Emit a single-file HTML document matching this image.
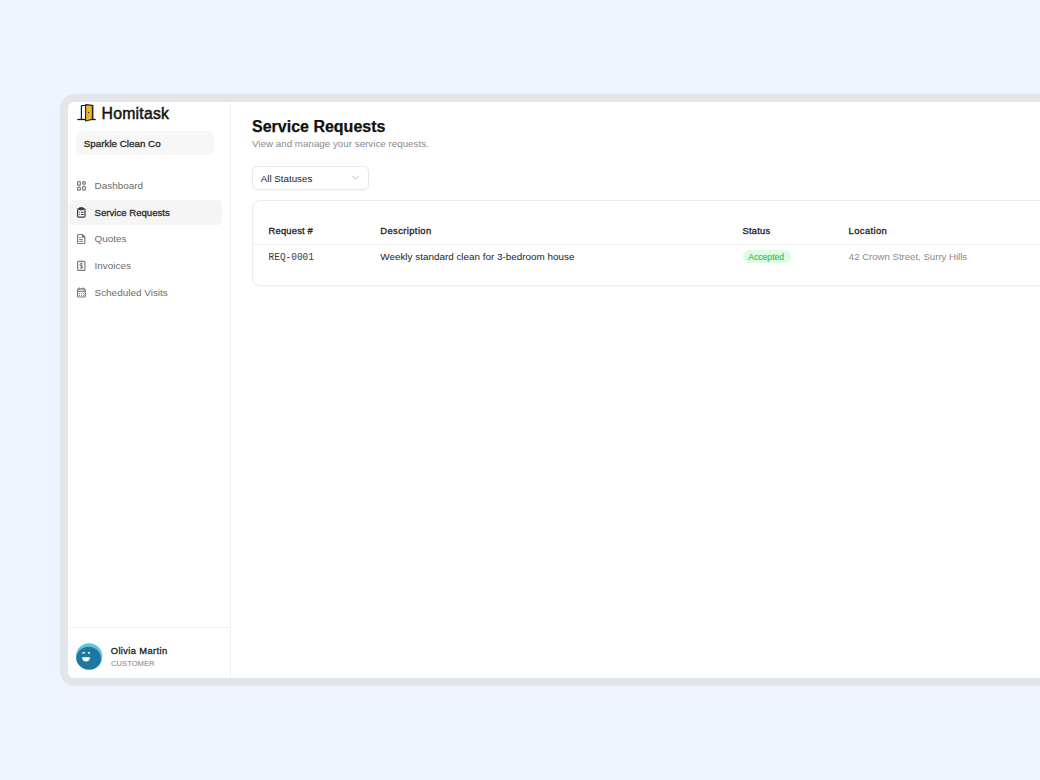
<!DOCTYPE html>
<html>
<head>
<meta charset="utf-8">
<style>
* { box-sizing: border-box; margin: 0; padding: 0; }
html, body { width: 1040px; height: 780px; overflow: hidden; }
body { background: #eef5fe; font-family: "Liberation Sans", sans-serif; position: relative; }
.frame { position: absolute; left: 60px; top: 94px; width: 1100px; height: 592px; background: #e4e5e9; border-radius: 15px; }
.app { position: absolute; left: 68px; top: 102px; width: 1100px; height: 576px; background: #fff; border-radius: 6px; overflow: hidden; }
.abs { position: absolute; white-space: nowrap; }
.side { position: absolute; left: 0; top: 0; width: 163px; height: 576px; border-right: 1px solid #f1f1f2; }
.t { position: absolute; white-space: nowrap; line-height: 1; }
</style>
</head>
<body>
<div class="frame"></div>
<div class="app">
  <div class="side"></div>
</div>

<!-- logo -->
<svg class="abs" style="left:76px;top:103px" width="22" height="20" viewBox="0 0 22 20">
  <path d="M5.4 16.5 V3.6 Q5.4 2.5 6.5 2.5 H10" fill="none" stroke="#161616" stroke-width="1.2"/>
  <path d="M15.5 2.5 H16.8 V16.5" fill="none" stroke="#161616" stroke-width="1.2"/>
  <path d="M1.4 16.5 H19.7" fill="none" stroke="#161616" stroke-width="1.3"/>
  <path d="M9.6 1.6 L16.4 2.4 V16.3 L9.6 18 Z" fill="#e8b820" stroke="#22232a" stroke-width="1.1" stroke-linejoin="round"/>
  <circle cx="12.5" cy="9.6" r="0.7" fill="#161616"/>
</svg>
<div class="t" style="left:101.6px;top:106.1px;font-size:15.8px;letter-spacing:0.22px;font-weight:400;color:#141414;-webkit-text-stroke:0.5px #141414;">Homitask</div>

<!-- org box -->
<div class="abs" style="left:76px;top:131px;width:138px;height:24px;background:#f7f7f7;border-radius:6px;"></div>
<div class="t" style="left:83.8px;top:138.9px;font-size:9.8px;color:#2a2a2a;-webkit-text-stroke:0.3px #2a2a2a;">Sparkle Clean Co</div>

<!-- nav -->
<div class="abs" style="left:68.5px;top:200px;width:153.5px;height:25px;background:#f5f5f5;border-radius:4.5px;"></div>
<div class="t" style="left:94.5px;top:181.2px;font-size:9.95px;color:#6c6c6c;">Dashboard</div>
<div class="t" style="left:94.6px;top:207.8px;font-size:9.6px;color:#2b2b2b;-webkit-text-stroke:0.3px #2b2b2b;">Service Requests</div>
<div class="t" style="left:94.5px;top:234.4px;font-size:9.95px;color:#6c6c6c;">Quotes</div>
<div class="t" style="left:94.5px;top:261.2px;font-size:9.95px;color:#6c6c6c;">Invoices</div>
<div class="t" style="left:94.5px;top:287.5px;font-size:9.95px;color:#6c6c6c;">Scheduled Visits</div>


<!-- icons -->
<svg class="abs" style="left:0;top:0" width="240" height="310" viewBox="0 0 240 310" fill="none" stroke="#7a7a7a" stroke-width="1.2">
  <!-- dashboard -->
  <rect x="77.5" y="181.7" width="2.9" height="3.5" rx="0.9"/>
  <rect x="82.6" y="181.7" width="2.7" height="2.5" rx="0.9"/>
  <rect x="77.5" y="187.2" width="2.9" height="2.9" rx="0.9"/>
  <rect x="82.6" y="186.4" width="2.7" height="3.7" rx="0.9"/>
  <!-- quotes -->
  <path d="M78.6 234.5 H82.4 L84.9 237 V242.6 Q84.9 243.5 84 243.5 H78.6 Q77.6 243.5 77.6 242.6 V235.4 Q77.6 234.5 78.6 234.5 Z"/>
  <path d="M82.3 234.6 V237.2 H84.8" fill="#7a7a7a"/>
  <path d="M79.2 237.6 H80.7 M79.2 239.4 H82.9 M79.2 241.3 H83.1" stroke-width="1"/>
  <!-- invoices -->
  <rect x="77.6" y="261.3" width="7.3" height="9" rx="0.9"/>
  <path d="M81.3 262.6 V269 M82.7 264.1 Q82.3 263.5 81.2 263.5 Q79.9 263.5 79.9 264.6 Q79.9 265.6 81.3 265.8 Q82.7 266 82.7 267 Q82.7 268.1 81.3 268.1 Q80.2 268.1 79.8 267.5" stroke-width="1"/>
  <!-- calendar -->
  <rect x="77.6" y="288.9" width="7.6" height="8.1" rx="1"/>
  <path d="M77.6 291.3 H85.2"/>
  <path d="M79.4 287.6 V289.6 M83.3 287.6 V289.6" stroke-width="1.3"/>
  <path d="M79 293.5 H79.9 M81 293.5 H81.9 M83 293.5 H83.9 M79 295.5 H79.9 M81 295.5 H81.9 M83 295.5 H83.9" stroke-width="1"/>
</svg>
<svg class="abs" style="left:0;top:0" width="240" height="310" viewBox="0 0 240 310" fill="none" stroke="#3a3a3a" stroke-width="1.2">
  <!-- clipboard -->
  <rect x="77.6" y="208.6" width="7.4" height="8.5" rx="1.2"/>
  <rect x="79.4" y="207.8" width="3.8" height="1.8" rx="0.7" fill="#3a3a3a"/>
  <path d="M79 212.3 H79.8 M80.9 212.3 H83.6 M79 214.5 H79.8 M80.9 214.5 H83.6" stroke-width="1.1"/>
</svg>
<!-- avatar -->
<svg class="abs" style="left:75px;top:642px" width="28" height="28" viewBox="0 0 28 28">
  <defs><clipPath id="ac"><circle cx="14.1" cy="14.4" r="13.2"/></clipPath></defs>
  <circle cx="14.1" cy="14.4" r="13.2" fill="#60c3dc"/>
  <circle cx="13.6" cy="17.1" r="12.4" fill="#1f789f" clip-path="url(#ac)"/>
  <path d="M7.3 11.7 Q8.6 9.7 10 11.2" fill="none" stroke="#fff" stroke-width="1.2"/>
  <rect x="13.1" y="10.1" width="1.8" height="1.7" rx="0.3" fill="#eef8fa"/>
  <path d="M6.9 15.2 H15.2 Q14.6 19.4 11 19.4 Q7.6 19.4 6.9 15.2 Z" fill="#fff"/>
</svg>

<!-- footer -->
<div class="abs" style="left:68px;top:627px;width:162px;height:1px;background:#f0f0f1;"></div>
<div class="t" style="left:110.8px;top:646px;font-size:9.4px;letter-spacing:0.35px;color:#222;-webkit-text-stroke:0.3px #222;">Olivia Martin</div>
<div class="t" style="left:111px;top:659.8px;font-size:7.65px;color:#828282;">CUSTOMER</div>

<!-- main -->
<div class="t" style="left:252px;top:118.5px;font-size:16px;font-weight:700;color:#111;-webkit-text-stroke:0.25px #111;">Service Requests</div>
<div class="t" style="left:252px;top:138.5px;font-size:9.8px;color:#8a8a8a;">View and manage your service requests.</div>

<div class="abs" style="left:252px;top:166px;width:117px;height:24px;border:1px solid #e8e8ea;border-radius:5px;box-shadow:0 1px 1px rgba(0,0,0,0.03);"></div>
<div class="t" style="left:260.8px;top:173.6px;font-size:9.75px;color:#222;">All Statuses</div>
<svg class="abs" style="left:351px;top:175px" width="9" height="6" viewBox="0 0 9 6"><path d="M1.4 1.3 L4.6 4.3 L7.8 1.3" fill="none" stroke="#b4b4b4" stroke-width="0.85"/></svg>

<div class="abs" style="left:252px;top:200px;width:900px;height:86px;border:1px solid #ececee;border-radius:8px;box-shadow:0 1px 2px rgba(0,0,0,0.04);"></div>
<div class="abs" style="left:253px;top:244px;width:900px;height:1px;background:#f1f1f2;"></div>

<div class="t" style="left:268.5px;top:226px;font-size:9.4px;letter-spacing:0.2px;color:#222;-webkit-text-stroke:0.3px #222;">Request #</div>
<div class="t" style="left:380.3px;top:226px;font-size:9.4px;letter-spacing:0.4px;color:#222;-webkit-text-stroke:0.3px #222;">Description</div>
<div class="t" style="left:742.6px;top:226px;font-size:9.4px;letter-spacing:0.2px;color:#222;-webkit-text-stroke:0.3px #222;">Status</div>
<div class="t" style="left:848.6px;top:226px;font-size:9.4px;letter-spacing:0.4px;color:#222;-webkit-text-stroke:0.3px #222;">Location</div>

<div class="t" style="left:268.6px;top:252.6px;font-size:9.45px;font-family:'Liberation Mono',monospace;color:#3c3c3c;transform:scaleY(1.16);transform-origin:0 7.5px;">REQ-0001</div>
<div class="t" style="left:380.3px;top:252.3px;font-size:9.9px;color:#222;">Weekly standard clean for 3-bedroom house</div>
<div class="abs" style="left:743px;top:250px;width:48px;height:13px;background:#dcfce6;border-radius:7px;"></div>
<div class="t" style="left:748.2px;top:253.4px;font-size:8.65px;color:#3cbb67;-webkit-text-stroke:0.15px #3cbb67;">Accepted</div>
<div class="t" style="left:848.8px;top:252.2px;font-size:9.6px;color:#8a8a8a;">42 Crown Street, Surry Hills</div>

</body>
</html>
